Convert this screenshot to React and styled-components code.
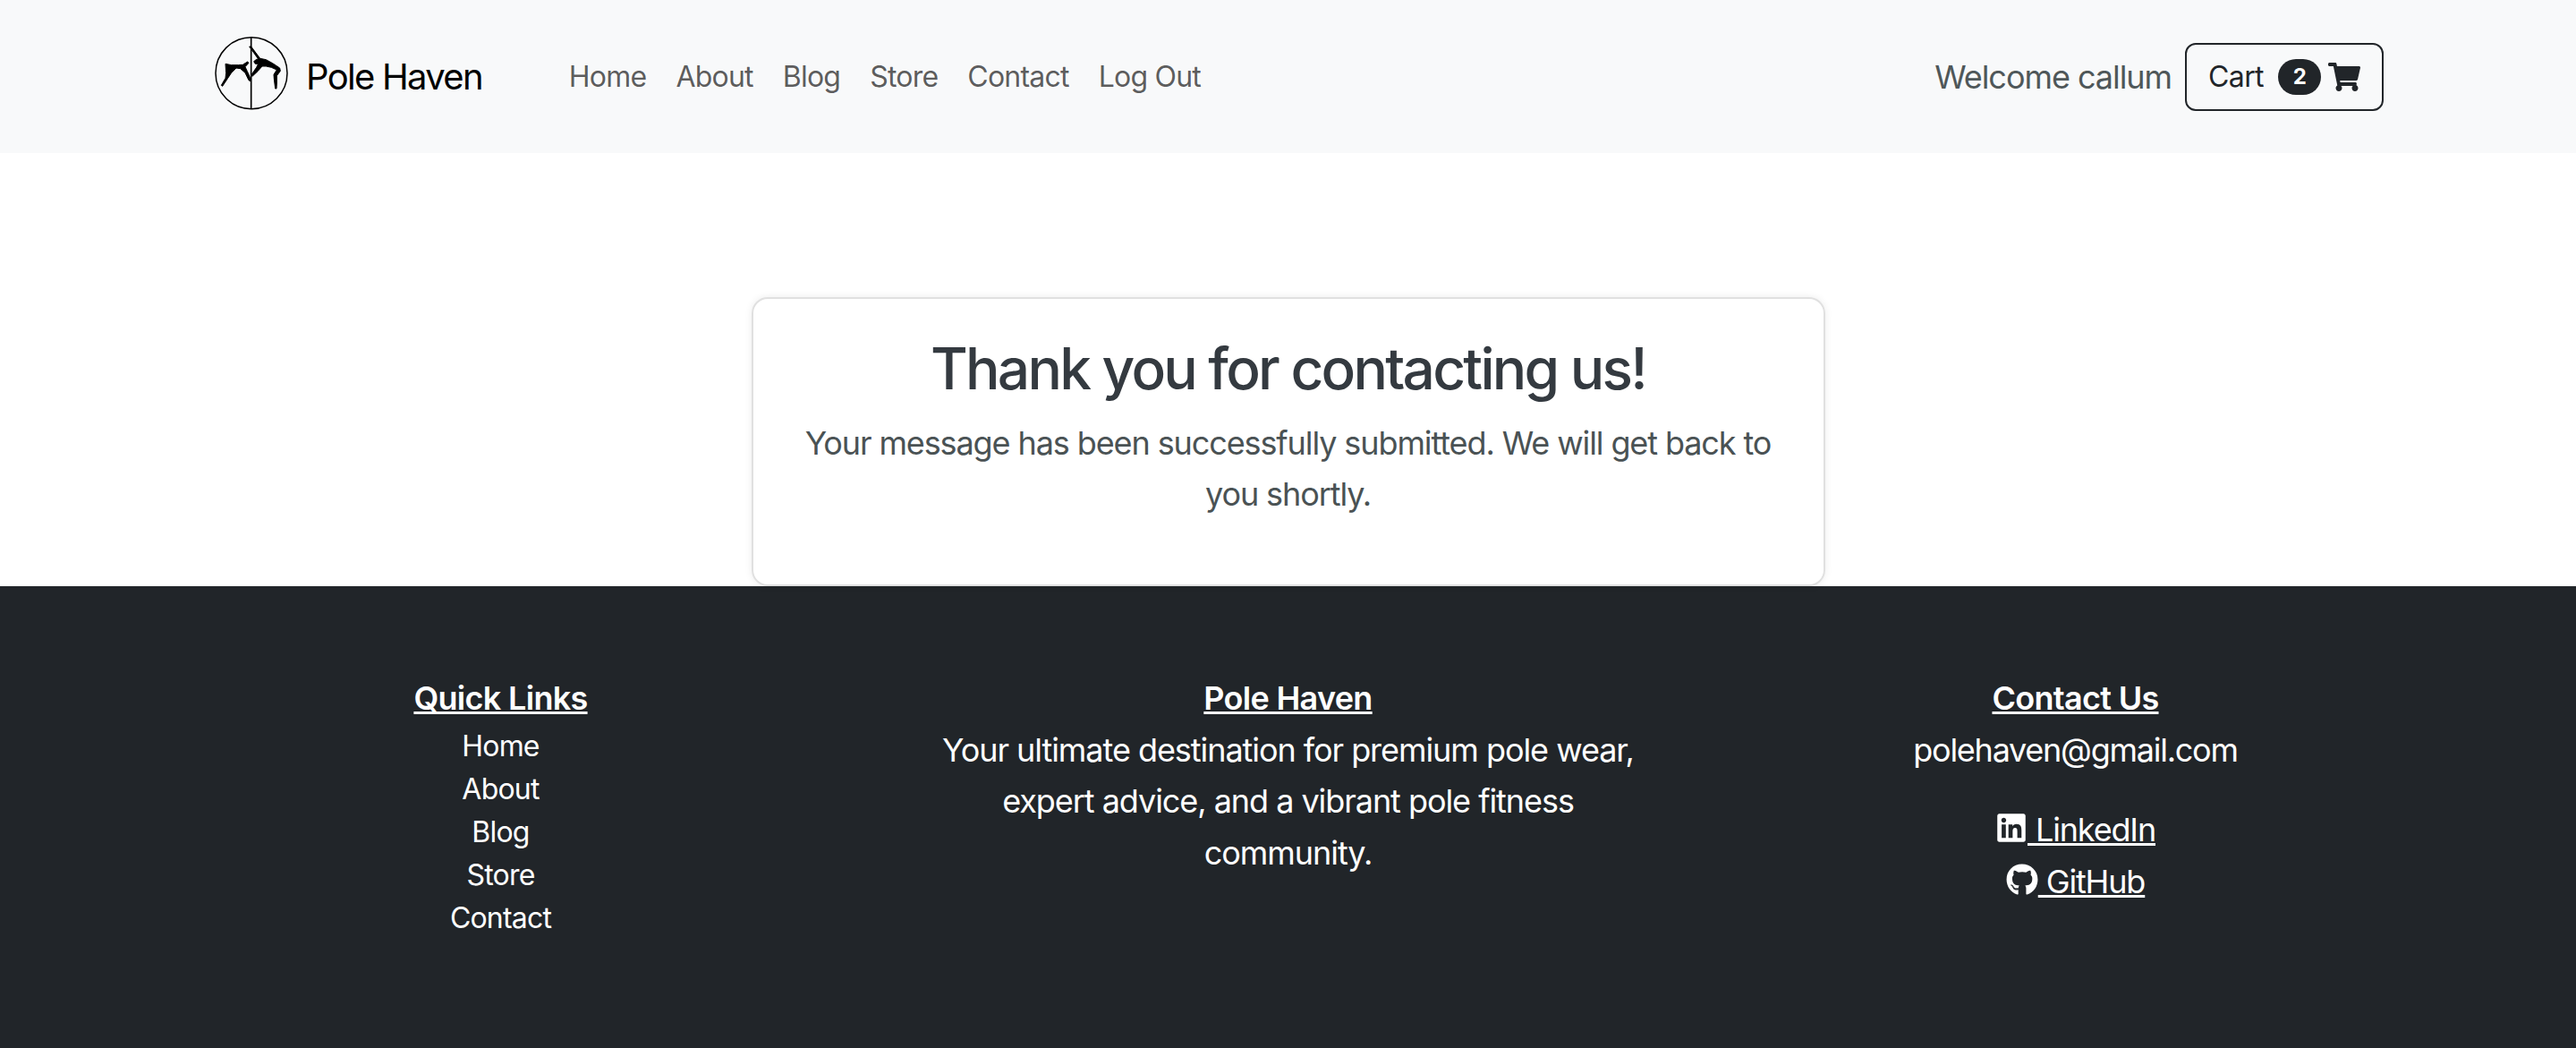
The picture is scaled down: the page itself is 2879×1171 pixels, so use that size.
import React from 'react';
import styled, { createGlobalStyle } from 'styled-components';
import { FaShoppingCart, FaLinkedin, FaGithub } from 'react-icons/fa';

const GlobalStyle = createGlobalStyle`
  html, body { margin: 0; padding: 0; background: #fff; }
  body { font-family: Inter, "Liberation Sans", sans-serif; color: #212529; }
  a { color: inherit; }
`;

const Navbar = styled.nav`
  height: 171px;
  background: #f8f9fa;
  box-sizing: border-box;
  padding: 0 215px 0 240px;
  display: flex;
  align-items: center;
`;

const Brand = styled.a`
  display: flex;
  align-items: center;
  gap: 18px;
  font-size: 40px;
  letter-spacing: -1.7px;
  color: #000;
  text-decoration: none;
  margin-right: 97px;
  svg { margin-bottom: 9px; }
`;

const NavLinks = styled.div`
  display: flex;
  gap: 33px;
  flex: 1;
`;

const NavLink = styled.a`
  font-size: 32px;
  letter-spacing: -0.78px;
  color: rgba(0, 0, 0, 0.65);
  text-decoration: none;
`;

const Welcome = styled.span`
  font-size: 36px;
  letter-spacing: -1.05px;
  color: #4f5759;
  margin-right: 15px;
`;

const CartButton = styled.button`
  display: flex;
  align-items: center;
  height: 76px;
  padding: 0 24px;
  background: transparent;
  border: 2px solid #212529;
  border-radius: 12px;
  font: 32px Inter, sans-serif;
  letter-spacing: -0.6px;
  color: #212529;
`;

const Badge = styled.span`
  display: inline-flex;
  align-items: center;
  justify-content: center;
  width: 48px;
  height: 40px;
  margin: 0 8px 0 16px;
  border-radius: 20px;
  background: #212529;
  color: #fff;
  font-size: 24px;
  font-weight: 700;
`;

const Main = styled.main`
  padding-top: 161px;
  display: flex;
  justify-content: center;
`;

const Card = styled.section`
  width: 1200px;
  height: 323px;
  box-sizing: border-box;
  padding: 40px 48px 0;
  border: 2px solid #e0e0e0;
  border-radius: 18px;
  text-align: center;
  box-shadow: 0 0 8px rgba(0, 0, 0, 0.08);
`;

const Title = styled.h1`
  margin: 0 0 16px;
  font-size: 64px;
  line-height: 1.2;
  font-weight: 500;
  letter-spacing: -2.75px;
  color: #343a40;
`;

const Message = styled.p`
  margin: 0;
  font-size: 36px;
  line-height: 57.6px;
  letter-spacing: -1.1px;
  color: #4a5254;
`;

const Footer = styled.footer`
  height: 516px;
  background: #212529;
  color: #fff;
  display: flex;
  justify-content: center;
  text-align: center;
  padding-top: 97px;
  box-sizing: border-box;
`;

const FooterGrid = styled.div`
  width: 2640px;
  display: grid;
  grid-template-columns: repeat(3, 1fr);
`;

const FooterColumn = styled.div`
  padding: 0 40px;
`;

const FooterHeading = styled.h2`
  margin: 0;
  font-size: 36px;
  line-height: 57.6px;
  font-weight: 600;
  letter-spacing: -0.7px;
  text-decoration: underline;
`;

const FooterLink = styled.a`
  display: block;
  font-size: 32px;
  line-height: 48px;
  letter-spacing: -0.8px;
  text-decoration: none;
`;

const FooterText = styled.p`
  margin: 0 0 ${(p) => p.$gap || 0}px;
  font-size: 36px;
  line-height: 57.6px;
  letter-spacing: ${(p) => (p.$gap ? -1.25 : -1.05)}px;
`;

const SocialLink = styled.a`
  display: block;
  font-size: 36px;
  line-height: 57.6px;
  letter-spacing: -1.15px;
  text-decoration: underline;
  svg { vertical-align: -3px; }
`;

function Logo() {
  return (
    <svg width="84" height="84" viewBox="6 3 252 252" fill="none">
      <circle cx="129" cy="131" r="120" stroke="#000" strokeWidth="4.5" />
      <line x1="128" y1="10" x2="128" y2="252" stroke="#000" strokeWidth="5" />
      <path
        d="M122 42L128 42L158 82L178 86L200 98L224 114L226 124L214 140L214 165L213 183L209 183L205 150L204 136L214 120L196 112L178 108L165 108L150 125L132 142L128 138L146 112L152 100L142 100L137 92L146 85L152 84Z"
        fill="#000"
        stroke="#000"
        strokeWidth="3"
      />
      <path
        d="M42 100L62 104L85 104L100 103L116 93L120 97L108 110L115 125L124 145L125 158L120 155L108 130L92 116L78 114L62 130L50 148L32 175L28 172L42 148L44 130Z"
        fill="#000"
        stroke="#000"
        strokeWidth="3"
      />
    </svg>
  );
}

export default function App() {
  return (
    <>
      <GlobalStyle />
      <Navbar>
        <Brand href="#">
          <Logo />
          Pole Haven
        </Brand>
        <NavLinks>
          {['Home', 'About', 'Blog', 'Store', 'Contact', 'Log Out'].map((l) => (
            <NavLink href="#" key={l}>{l}</NavLink>
          ))}
        </NavLinks>
        <Welcome>Welcome callum</Welcome>
        <CartButton>
          Cart
          <Badge>2</Badge>
          <FaShoppingCart size={36} />
        </CartButton>
      </Navbar>
      <Main>
        <Card>
          <Title>Thank you for contacting us!</Title>
          <Message>Your message has been successfully submitted. We will get back to you shortly.</Message>
        </Card>
      </Main>
      <Footer>
        <FooterGrid>
          <FooterColumn>
            <FooterHeading>Quick Links</FooterHeading>
            {['Home', 'About', 'Blog', 'Store', 'Contact'].map((l) => (
              <FooterLink href="#" key={l}>{l}</FooterLink>
            ))}
          </FooterColumn>
          <FooterColumn>
            <FooterHeading>Pole Haven</FooterHeading>
            <FooterText>Your ultimate destination for premium pole wear, expert advice, and a vibrant pole fitness community.</FooterText>
          </FooterColumn>
          <FooterColumn>
            <FooterHeading>Contact Us</FooterHeading>
            <FooterText $gap={32}>polehaven@gmail.com</FooterText>
            <SocialLink href="#"><FaLinkedin size={36} /> LinkedIn</SocialLink>
            <SocialLink href="#"><FaGithub size={36} /> GitHub</SocialLink>
          </FooterColumn>
        </FooterGrid>
      </Footer>
    </>
  );
}
